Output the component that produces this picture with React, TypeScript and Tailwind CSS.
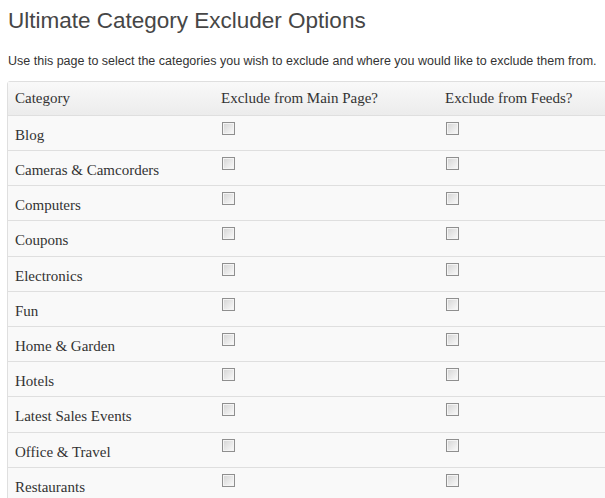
import React from 'react';

const categories = [
  'Blog',
  'Cameras & Camcorders',
  'Computers',
  'Coupons',
  'Electronics',
  'Fun',
  'Home & Garden',
  'Hotels',
  'Latest Sales Events',
  'Office & Travel',
  'Restaurants',
];

// a couple of rows sit one pixel taller in the original
const tall = ['Coupons', 'Latest Sales Events'];

const Box: React.FC = () => (
  <span className="block w-[13px] h-[13px] border border-[#8f8f8f] bg-gradient-to-br from-[#d4d4d4] to-[#fbfbfb] shadow-[inset_0_0_0_1px_#f4f4f4]" />
);

export default function App() {
  return (
    <div className="w-[605px] h-[498px] overflow-hidden bg-white">
      <div className="pl-[8px] pt-[6px]">
        <h2 className="text-[22.5px] leading-[29px] text-[#464646] font-['Liberation_Sans',Arial,sans-serif]">
          Ultimate Category Excluder Options
        </h2>
        <p className="mt-[18px] text-[12.5px] leading-[16px] text-[#333] font-['Liberation_Sans',Arial,sans-serif] whitespace-nowrap">
          Use this page to select the categories you wish to exclude and where you would like to exclude them from.
        </p>
      </div>
      <div className="ml-[7px] mt-[12px] w-[680px] border border-[#dfdfdf] rounded-tl-[3px] bg-[#f9f9f9] font-['Liberation_Serif',Georgia,serif] text-[15px] text-[#333]">
        <div className="grid grid-cols-[206px_224px_1fr] h-[34px] items-center bg-gradient-to-b from-[#f9f9f9] to-[#ececec] border-b border-[#dfdfdf]">
          <div className="pl-[7px]">Category</div>
          <div className="pl-[7px]">Exclude from Main Page?</div>
          <div className="pl-[7px]">Exclude from Feeds?</div>
        </div>
        {categories.map((c) => (
          <div
            key={c}
            className={`grid grid-cols-[206px_224px_1fr] border-b border-[#dfdfdf] ${tall.includes(c) ? 'h-[36px]' : 'h-[35px]'}`}
          >
            <div className="pl-[7px] pt-[8px]">{c}</div>
            <div className="pl-[8px] pt-[6px]"><Box /></div>
            <div className="pl-[8px] pt-[6px]"><Box /></div>
          </div>
        ))}
      </div>
    </div>
  );
}
